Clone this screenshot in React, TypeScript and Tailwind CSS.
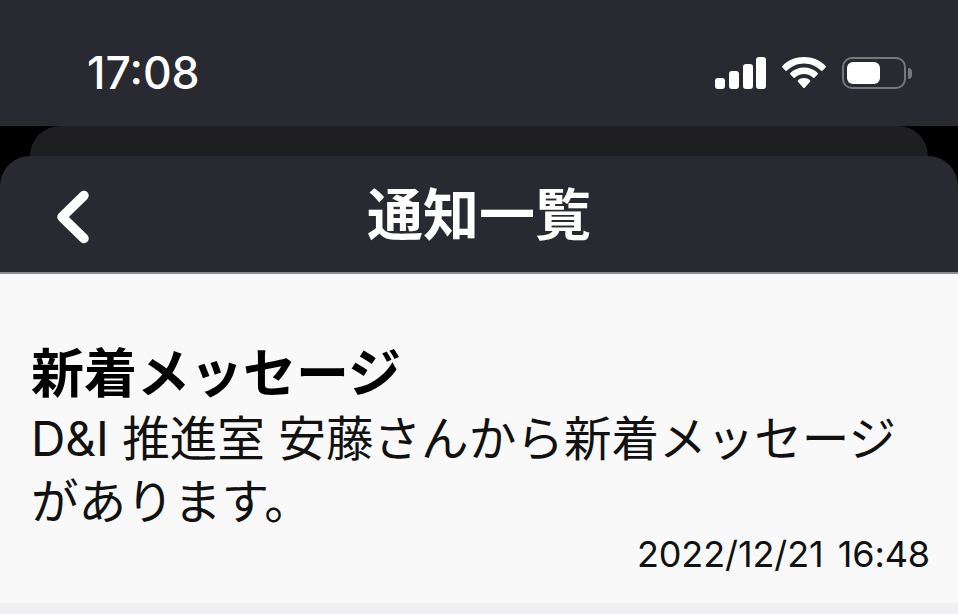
import React from "react";

export default function App() {
  return (
    <div className="w-[958px] h-[614px] overflow-hidden bg-black flex flex-col font-['Inter','Noto_Sans_CJK_JP',sans-serif]">
      <div className="h-[126px] bg-[#282931] flex items-start justify-between pl-[87px] pr-[46px] pt-[50px] shrink-0">
        <span className="text-[44.5px] leading-[46px] font-medium text-white">17:08</span>
        <div className="flex items-center gap-[16px] pt-[7px]">
          <svg width="51" height="32" viewBox="0 0 51 32" fill="#fff">
            <rect x="0" y="21" width="10" height="11" rx="3" />
            <rect x="14" y="14" width="10" height="18" rx="3" />
            <rect x="28" y="7" width="10" height="25" rx="3" />
            <rect x="41" y="0" width="10" height="32" rx="3" />
          </svg>
          <svg width="44" height="32" viewBox="0 0 44 32" fill="#fff">
            <path d="M22 0C13.500 0 6 3.300 .5 8.700c-.6.600-.6 1.300 0 1.900l2.800 3c.5.500 1.300.500 1.800 0C9.500 9.400 15.400 6.600 22 6.600s12.500 2.800 16.900 7c.5.500 1.300.500 1.800 0l2.800-3c.6-.6.600-1.300 0-1.900C38 3.300 30.500 0 22 0z" />
            <path d="M22 10.500c-5.300 0-10 2-13.500 5.300-.5.500-.5 1.200 0 1.700l2.800 3c.5.500 1.200.500 1.800 0 2.300-2.100 5.400-3.400 8.900-3.400s6.600 1.300 8.900 3.400c.6.500 1.300.500 1.800 0l2.800-3c.5-.5.500-1.200 0-1.700C32 12.500 27.300 10.500 22 10.500z" />
            <path d="M22 21c-2.400 0-4.500.9-6 2.200-.5.500-.5 1.100 0 1.600l5 5.600c.6.700 1.400.700 2 0l5-5.600c.5-.5.500-1.100 0-1.600C26.500 21.900 24.400 21 22 21z" />
          </svg>
          <div className="flex items-center gap-[2px]">
            <div className="w-[64px] h-[32px] rounded-[10px] border-2 border-[#77787d] p-[3px]">
              <div className="w-[33px] h-full rounded-[6px] bg-white" />
            </div>
            <div className="w-[4px] h-[11px] rounded-r-[4px] bg-[#77787d]" />
          </div>
        </div>
      </div>
      <div className="h-[30px] bg-black px-[30px] shrink-0">
        <div className="h-[30px] bg-[#1f1f22] rounded-t-[30px]" />
      </div>
      <div className="h-[118px] bg-[#282931] rounded-t-[30px] flex items-center justify-center relative shrink-0 border-b-2 border-[#8e8e92] pt-[2px]">
        <svg className="absolute left-[55px] top-[33px]" width="36" height="56" viewBox="0 0 36 56" fill="none" stroke="#fff" strokeWidth="9.5" strokeLinecap="round" strokeLinejoin="round">
          <path d="M29 6.500 L7 28 L29 49.500" />
        </svg>
        <span className="text-[56px] leading-[64px] font-bold text-white">通知一覧</span>
      </div>
      <div className="flex-1 bg-[#f9f9f9] px-[31px] pt-[70px] relative">
        <div className="text-[53px] leading-[60px] font-bold text-black">新着メッセージ</div>
        <div className="text-[47.600px] leading-[63px] text-[#111] mt-[3px] w-[880px]">D&amp;I 推進室 安藤さんから新着メッセージがあります。</div>
      </div>
      <div className="bg-[#f9f9f9] h-0 relative">
        <div className="absolute right-[28px] bottom-[28px] text-[36px] tracking-[-0.1px] [word-spacing:4px] leading-[42px] text-[#111]">2022/12/21 16:48</div>
      </div>
      <div className="h-[11px] bg-[#efeff4] shrink-0" />
    </div>
  );
}
